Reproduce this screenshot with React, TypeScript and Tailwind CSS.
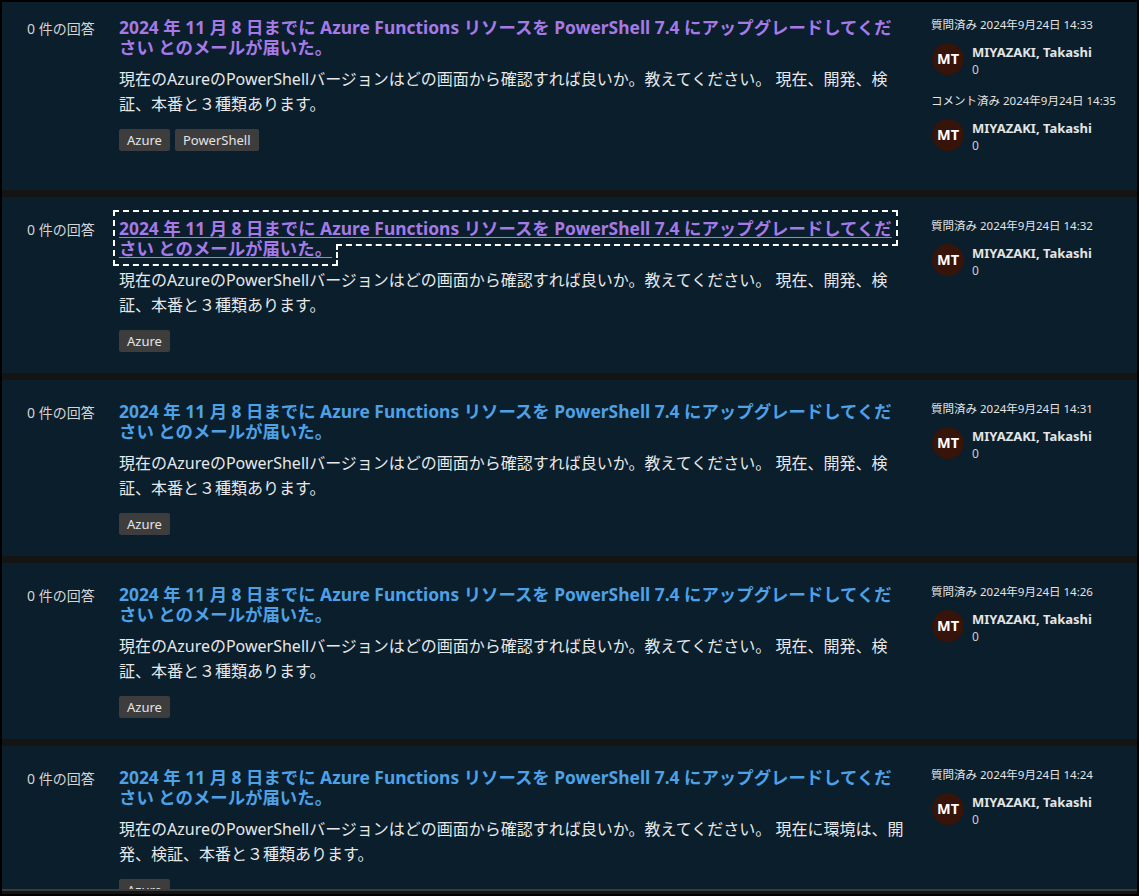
const TITLE =
  "2024 年 11 月 8 日までに Azure Functions リソースを PowerShell 7.4 にアップグレードしてください とのメールが届いた。";
const BODY =
  "現在のAzureのPowerShellバージョンはどの画面から確認すれば良いか。教えてください。 現在、開発、検証、本番と３種類あります。";
const BODY_ALT =
  "現在のAzureのPowerShellバージョンはどの画面から確認すれば良いか。教えてください。 現在に環境は、開発、検証、本番と３種類あります。";

type Activity = { label: string; date: string };

interface Question {
  tags: string[];
  visited: boolean;
  focused?: boolean;
  body: string;
  activity: Activity[];
}

const questions: Question[] = [
  {
    tags: ["Azure", "PowerShell"],
    visited: true,
    body: BODY,
    activity: [
      { label: "質問済み", date: "2024年9月24日 14:33" },
      { label: "コメント済み", date: "2024年9月24日 14:35" },
    ],
  },
  {
    tags: ["Azure"],
    visited: true,
    focused: true,
    body: BODY,
    activity: [{ label: "質問済み", date: "2024年9月24日 14:32" }],
  },
  {
    tags: ["Azure"],
    visited: false,
    body: BODY,
    activity: [{ label: "質問済み", date: "2024年9月24日 14:31" }],
  },
  {
    tags: ["Azure"],
    visited: false,
    body: BODY,
    activity: [{ label: "質問済み", date: "2024年9月24日 14:26" }],
  },
  {
    tags: ["Azure"],
    visited: false,
    body: BODY_ALT,
    activity: [{ label: "質問済み", date: "2024年9月24日 14:24" }],
  },
];

const QuestionCard = ({ q, first }: { q: Question; first: boolean }) => {
  return (
    <div
      className={`flex bg-[#0a1e2c] pl-[25px] pb-[21px] ${
        first ? "pt-[15px]" : "pt-[21px]"
      }`}
    >
      <div className="w-[92px] shrink-0 pt-[2px] text-[14px] leading-[20px] text-[#d4d4d4]">
        0 件の回答
      </div>

      <div className="w-[786px] shrink-0">
        <h3 className="text-[17.4px] font-bold leading-[20px]">
          <a
            href="#"
            className={
              (q.visited ? "text-[#a57ae6]" : "text-[#4ea1e6]") +
              (q.focused
                ? " underline underline-offset-2 outline-2 outline-dashed outline-white outline-offset-[4px]"
                : " no-underline")
            }
          >
            {TITLE}
          </a>
        </h3>
        <p className="mt-[10px] text-[16px] leading-[25px] text-[#e8e8e8]">
          {q.body}
        </p>
        <div className="mt-[12px] flex gap-[5px]">
          {q.tags.map((t) => (
            <span
              key={t}
              className="h-[22px] rounded-[2px] bg-[#3d3d3d] px-[8px] text-[13px] leading-[22px] text-[#e4e4e4]"
            >
              {t}
            </span>
          ))}
        </div>
      </div>

      <div className="ml-[26px] w-[200px] shrink-0">
        {q.activity.map((a, i) => (
          <div key={i} className="mb-[18px]">
            <div className="whitespace-nowrap text-[11.5px] leading-[16px] text-[#e4e4e4]">
              {a.label} {a.date}
            </div>
            <div className="mt-[10px] flex h-[32px] items-start gap-[8px] pl-[1px]">
              <div className="flex h-[32px] w-[32px] shrink-0 items-center justify-center rounded-full bg-[#36140a] text-[14.5px] font-bold text-white">
                MT
              </div>
              <div className="pt-[1px]">
                <div className="text-[13px] font-bold leading-[16px] text-[#e4e4e4]">
                  MIYAZAKI, Takashi
                </div>
                <div className="mt-[2px] text-[12px] leading-[16px] text-[#cfcfcf]">
                  0
                </div>
              </div>
            </div>
          </div>
        ))}
      </div>
    </div>
  );
};

export default function App() {
  return (
    <div className="h-[896px] overflow-hidden border-2 border-black bg-[#141414] font-['Noto_Sans','Noto_Sans_CJK_JP',sans-serif]">
      <div className="flex h-[889px] flex-col gap-[7px] overflow-hidden border-b-2 border-[#3a3a3a]">
        {questions.map((q, i) => (
          <QuestionCard key={i} q={q} first={i === 0} />
        ))}
      </div>
    </div>
  );
}
